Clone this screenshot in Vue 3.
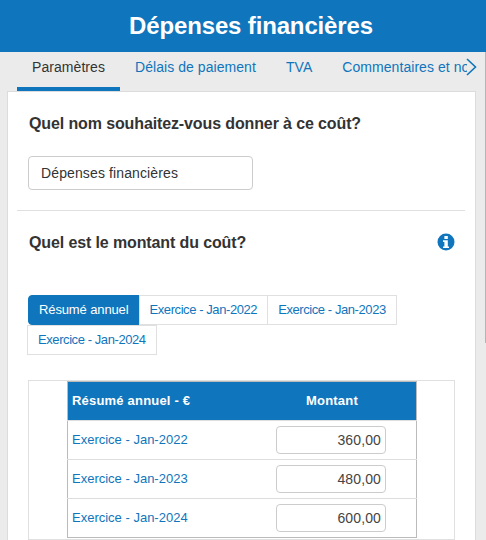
<script setup>
const tabs = [
  { label: "Paramètres", active: true },
  { label: "Délais de paiement" },
  { label: "TVA" },
  { label: "Commentaires et notes" },
];
const periods = [
  { label: "Résumé annuel", active: true },
  { label: "Exercice - Jan-2022" },
  { label: "Exercice - Jan-2023" },
  { label: "Exercice - Jan-2024" },
];
const rows = [
  { label: "Exercice - Jan-2022", amount: "360,00" },
  { label: "Exercice - Jan-2023", amount: "480,00" },
  { label: "Exercice - Jan-2024", amount: "600,00" },
];
</script>

<template>
  <div class="page">
    <header class="title-bar">Dépenses financières</header>

    <nav class="tabs">
      <div class="tab-list">
        <a
          v-for="tab in tabs"
          :key="tab.label"
          class="tab"
          :class="{ active: tab.active }"
        >{{ tab.label }}</a>
      </div>
      <svg class="tab-next" width="11" height="18" viewBox="0 0 11 18">
        <path d="M1 1l8.5 8-8.5 8" fill="none" stroke="#0f75bc" stroke-width="1.6" />
      </svg>
    </nav>

    <main class="card">
      <section class="name-section">
        <h2 class="question">Quel nom souhaitez-vous donner à ce coût?</h2>
        <input class="name-input" type="text" value="Dépenses financières" />
      </section>

      <section class="amount-section">
        <div class="amount-head">
          <h2 class="question">Quel est le montant du coût?</h2>
          <svg class="info" width="18" height="18" viewBox="0 0 18 18">
            <circle cx="9" cy="9" r="8.5" fill="#0f75bc" />
            <rect x="7.4" y="3" width="3.4" height="3" fill="#fff" />
            <path d="M6 7.3h4.8v6.2H12v1.6H6v-1.6h1.4V8.9H6z" fill="#fff" />
          </svg>
        </div>

        <div class="periods">
          <a
            v-for="period in periods"
            :key="period.label"
            class="period"
            :class="{ active: period.active }"
          >{{ period.label }}</a>
        </div>

        <div class="table-wrap">
          <table class="amounts">
            <thead>
              <tr>
                <th class="col-label"><span class="lift">Résumé annuel - €</span></th>
                <th class="col-amount"><span class="lift">Montant</span></th>
              </tr>
            </thead>
            <tbody>
              <tr v-for="row in rows" :key="row.label">
                <td class="row-label"><span class="lift">{{ row.label }}</span></td>
                <td class="row-amount">
                  <input class="amount-input" type="text" :value="row.amount" />
                </td>
              </tr>
            </tbody>
          </table>
        </div>
      </section>
    </main>

    <div class="scroll-thumb"></div>
  </div>
</template>

<style>
html,
body {
  margin: 0;
  height: 540px;
  overflow: hidden;
  background: #ebebeb;
}
</style>

<style scoped>
.page {
  position: relative;
  font-family: "Liberation Sans", Arial, sans-serif;
  font-size: 14px;
  letter-spacing: 0.12px;
  color: #333;
  height: 540px;
  overflow: hidden;
}
.title-bar {
  height: 52px;
  line-height: 52px;
  padding-left: 16px;
  background: #0f75bc;
  color: #fff;
  font-size: 24px;
  font-weight: bold;
  letter-spacing: -0.15px;
  text-align: center;
}
.tabs {
  display: flex;
  align-items: flex-start;
  height: 39px;
  padding-left: 17px;
  position: relative;
  overflow: hidden;
  letter-spacing: 0.06px;
}
.tab-list {
  display: flex;
  width: 450px;
  overflow: hidden;
  white-space: nowrap;
}
.tab {
  flex: none;
  height: 35px;
  line-height: 31px;
  padding: 0 15px;
  color: #0f75bc;
}
.tab.active {
  color: #333;
  border-bottom: 4px solid #0f75bc;
}
.tab-next {
  position: absolute;
  right: 9px;
  top: 6px;
}
.card {
  margin: 0 10px 0 7px;
  background: #fff;
  border: 1px solid #dcdcdc;
  border-bottom: 0;
  height: 460px;
}
.question {
  margin: 0;
  padding-left: 1px;
  font-size: 16px;
  font-weight: bold;
  line-height: 20px;
  letter-spacing: -0.12px;
  color: #333;
}
.name-section {
  margin: 0 10px 0 9px;
  padding: 22px 12px 20px 11px;
  height: 119px;
  box-sizing: border-box;
  border-bottom: 1px solid #e0e0e0;
}
.name-input {
  display: block;
  margin-top: 22px;
  width: 225px;
  height: 34px;
  box-sizing: border-box;
  padding: 0 12px;
  border: 1px solid #ccc;
  border-radius: 4px;
  font: inherit;
  letter-spacing: inherit;
  color: #333;
}
.amount-section {
  padding: 22px 20px 0;
}
.amount-head {
  display: flex;
  justify-content: space-between;
  align-items: center;
}
.info {
  margin-top: -3px;
}
.periods {
  display: flex;
  flex-wrap: wrap;
  margin-top: 42px;
}
.period {
  height: 30px;
  box-sizing: border-box;
  line-height: 28px;
  padding: 0 10px;
  border: 1px solid #e0e0e0;
  font-size: 13px;
  letter-spacing: -0.42px;
  color: #0f75bc;
  margin-left: -1px;
}
.period.active {
  background: #0f75bc;
  border-color: #0f75bc;
  border-radius: 4px 0 0 4px;
  letter-spacing: -0.12px;
  color: #fff;
  margin-left: 0;
}
.table-wrap {
  margin-top: 25px;
  width: 427px;
  box-sizing: border-box;
  border: 1px solid #e0e0e0;
  padding: 0 38px;
  height: 160px;
}
.amounts {
  width: 350px;
  border-collapse: collapse;
  border: 1px solid #bbb;
  font-size: 13px;
  letter-spacing: 0;
}
.lift {
  display: block;
  padding-bottom: 2px;
}
.amounts th {
  height: 38px;
  padding: 0 4px;
  background: #0f75bc;
  color: #fff;
  font-weight: bold;
  letter-spacing: 0.2px;
  text-align: left;
}
.amounts th.col-amount {
  text-align: center;
}
.amounts td {
  height: 38px;
  padding: 0 4px;
  border-top: 1px solid #ddd;
}
.row-label {
  color: #0f75bc;
}
.amounts .row-amount {
  width: 110px;
  padding: 0 30px 0 28px;
}
.amount-input {
  display: block;
  width: 110px;
  height: 28px;
  box-sizing: border-box;
  padding: 0 4px;
  border: 1px solid #ccc;
  border-radius: 4px;
  font: inherit;
  font-size: 14px;
  letter-spacing: 0.12px;
  text-align: right;
  color: #444;
}
.scroll-thumb {
  position: absolute;
  right: 0;
  top: 52px;
  width: 1px;
  height: 291px;
  background: #b4b4b4;
}
</style>
